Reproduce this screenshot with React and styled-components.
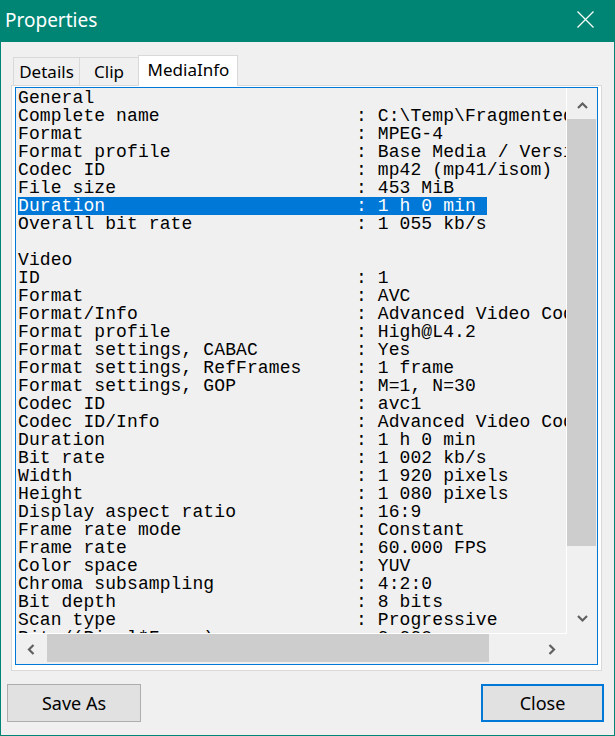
import React from "react";
import styled, { createGlobalStyle } from "styled-components";

const GREEN = "#008575";
const BLUE = "#0078d7";

const Global = createGlobalStyle`
  html, body { margin: 0; padding: 0; background: #f0f0f0; }
  * { box-sizing: border-box; }
`;

const Window = styled.div`
  width: 615px;
  height: 736px;
  border: 1px solid ${GREEN};
  border-top: none;
  display: flex;
  flex-direction: column;
  background: #f0f0f0;
  font-family: "Noto Sans", "Open Sans", sans-serif;
  color: #000;
  overflow: hidden;
`;

const TitleBar = styled.div`
  height: 42px;
  flex: none;
  background: ${GREEN};
  color: #fff;
  display: flex;
  align-items: center;
  justify-content: space-between;
  padding: 0 20px 0 4px;
`;

const Title = styled.div`
  font-size: 19px;
  line-height: 24px;
  margin-top: -2px;
`;

const CloseIcon = styled.svg`
  width: 17px;
  height: 17px;
  margin-top: -3px;
`;

const Body = styled.div`
  flex: 1;
  display: flex;
  flex-direction: column;
  padding-top: 13px;
`;

const TabRow = styled.div`
  display: flex;
  align-items: flex-start;
  height: 31px;
  margin: 0 0 -1px 12px;
  position: relative;
  z-index: 1;
`;

const Tab = styled.div`
  width: ${(p) => p.$w}px;
  height: ${(p) => (p.$active ? 31 : 28)}px;
  margin-top: ${(p) => (p.$active ? 0 : 2)}px;
  background: ${(p) => (p.$active ? "#fff" : "#f0f0f0")};
  border: 1px solid #d9d9d9;
  border-bottom: none;
  border-right: ${(p) => (p.$last ? "1px solid #d9d9d9" : "none")};
  display: flex;
  align-items: center;
  justify-content: center;
  font-size: 17px;
  padding-bottom: ${(p) => (p.$active ? 3 : 1)}px;
  padding-left: ${(p) => (p.$active ? 1 : 0)}px;
`;

const Panel = styled.div`
  margin: 0 12px 0 10px;
  border: 1px solid #d9d9d9;
  background: #fff;
  padding: 1px 3px 5px 3px;
  position: relative;
  z-index: 0;
`;

const InfoBox = styled.div`
  border: 1px solid ${BLUE};
  display: grid;
  grid-template-columns: 551px 30px;
  grid-template-rows: 546px 30px;
  background: #f0f0f0;
`;

const Viewport = styled.div`
  overflow: hidden;
  border-right: 1px solid #fff;
  border-bottom: 1px solid #fff;
  padding: 1px 0 0 2px;
  font-family: "Liberation Mono", "DejaVu Sans Mono", monospace;
  font-size: 18px;
  letter-spacing: 0.1px;
  line-height: 18px;
`;

const Line = styled.div`
  height: 18px;
  white-space: pre;
`;

const Sel = styled.span`
  display: inline-block;
  height: 18px;
  line-height: 18px;
  background: ${BLUE};
  color: #fff;
  padding-right: 11px;
`;

const VScroll = styled.div`
  display: flex;
  flex-direction: column;
`;

const HScroll = styled.div`
  display: flex;
`;

const ArrowBtn = styled.div`
  flex: none;
  width: ${(p) => (p.$v ? 30 : 31)}px;
  height: ${(p) => (p.$v ? 31 : 30)}px;
  display: flex;
  align-items: center;
  justify-content: center;
  padding-top: ${(p) => p.$pt || 0}px;
  padding-bottom: ${(p) => p.$pb || 0}px;
`;

const Track = styled.div`
  flex: 1;
  display: flex;
  flex-direction: ${(p) => (p.$v ? "column" : "row")};
`;

const Thumb = styled.div`
  background: #cdcdcd;
  flex: none;
  ${(p) =>
    p.$v
      ? `width: 29px; height: ${p.$size}px;`
      : `height: 28px; width: ${p.$size}px;`}
`;

const Corner = styled.div``;

const Footer = styled.div`
  margin-top: 13px;
  padding: 0 10px 0 6px;
  display: flex;
  justify-content: space-between;
`;

const Button = styled.div`
  width: ${(p) => p.$w}px;
  height: 38px;
  background: #e1e1e1;
  border: ${(p) => (p.$default ? `2px solid ${BLUE}` : "1px solid #adadad")};
  display: flex;
  align-items: center;
  justify-content: center;
  font-size: 18px;
  padding-bottom: 1px;
`;

const Chevron = ({ dir }) => {
  const pts = {
    up: "1,7 5.5,2.5 10,7",
    down: "1,2 5.5,6.5 10,2",
    left: "6.5,1 2,5.5 6.5,10",
    right: "2.5,1 7,5.5 2.5,10",
  }[dir];
  const vertical = dir === "up" || dir === "down";
  return (
    <svg
      width={vertical ? 11 : 9}
      height={vertical ? 9 : 11}
      viewBox={vertical ? "0 0 11 9" : "0 0 9 11"}
    >
      <polyline points={pts} fill="none" stroke="#606060" strokeWidth="2.2" />
    </svg>
  );
};

const rows = [
  { h: "General" },
  { k: "Complete name", v: "C:\\Temp\\Fragmented.mp4" },
  { k: "Format", v: "MPEG-4" },
  { k: "Format profile", v: "Base Media / Version 2" },
  { k: "Codec ID", v: "mp42 (mp41/isom)" },
  { k: "File size", v: "453 MiB" },
  { k: "Duration", v: "1 h 0 min", sel: true },
  { k: "Overall bit rate", v: "1 055 kb/s" },
  { h: "" },
  { h: "Video" },
  { k: "ID", v: "1" },
  { k: "Format", v: "AVC" },
  { k: "Format/Info", v: "Advanced Video Codec" },
  { k: "Format profile", v: "High@L4.2" },
  { k: "Format settings, CABAC", v: "Yes" },
  { k: "Format settings, RefFrames", v: "1 frame" },
  { k: "Format settings, GOP", v: "M=1, N=30" },
  { k: "Codec ID", v: "avc1" },
  { k: "Codec ID/Info", v: "Advanced Video Coding" },
  { k: "Duration", v: "1 h 0 min" },
  { k: "Bit rate", v: "1 002 kb/s" },
  { k: "Width", v: "1 920 pixels" },
  { k: "Height", v: "1 080 pixels" },
  { k: "Display aspect ratio", v: "16:9" },
  { k: "Frame rate mode", v: "Constant" },
  { k: "Frame rate", v: "60.000 FPS" },
  { k: "Color space", v: "YUV" },
  { k: "Chroma subsampling", v: "4:2:0" },
  { k: "Bit depth", v: "8 bits" },
  { k: "Scan type", v: "Progressive" },
  { k: "Bits/(Pixel*Frame)", v: "0.008" },
];

export default function App() {
  return (
    <>
      <Global />
      <Window>
        <TitleBar>
          <Title>Properties</Title>
          <CloseIcon viewBox="0 0 17 17">
            <path d="M0.5 0.5 L16.5 16.5 M16.5 0.5 L0.5 16.5" stroke="#fff" strokeWidth="1.2" fill="none" />
          </CloseIcon>
        </TitleBar>
        <Body>
          <TabRow>
            <Tab $w={66}>Details</Tab>
            <Tab $w={59}>Clip</Tab>
            <Tab $w={100} $active $last>
              MediaInfo
            </Tab>
          </TabRow>
          <Panel>
            <InfoBox>
              <Viewport>
                {rows.map((r, i) => {
                  const text = r.h !== undefined ? r.h : r.k.padEnd(31) + ": " + r.v;
                  return <Line key={i}>{r.sel ? <Sel>{text}</Sel> : text}</Line>;
                })}
              </Viewport>
              <VScroll>
                <ArrowBtn $v $pt={4}>
                  <Chevron dir="up" />
                </ArrowBtn>
                <Track $v>
                  <Thumb $v $size={427} />
                </Track>
                <ArrowBtn $v>
                  <Chevron dir="down" />
                </ArrowBtn>
              </VScroll>
              <HScroll>
                <ArrowBtn>
                  <Chevron dir="left" />
                </ArrowBtn>
                <Track>
                  <Thumb $size={442} />
                </Track>
                <ArrowBtn>
                  <Chevron dir="right" />
                </ArrowBtn>
              </HScroll>
              <Corner />
            </InfoBox>
          </Panel>
          <Footer>
            <Button $w={134}>Save As</Button>
            <Button $w={123} $default>
              Close
            </Button>
          </Footer>
        </Body>
      </Window>
    </>
  );
}
